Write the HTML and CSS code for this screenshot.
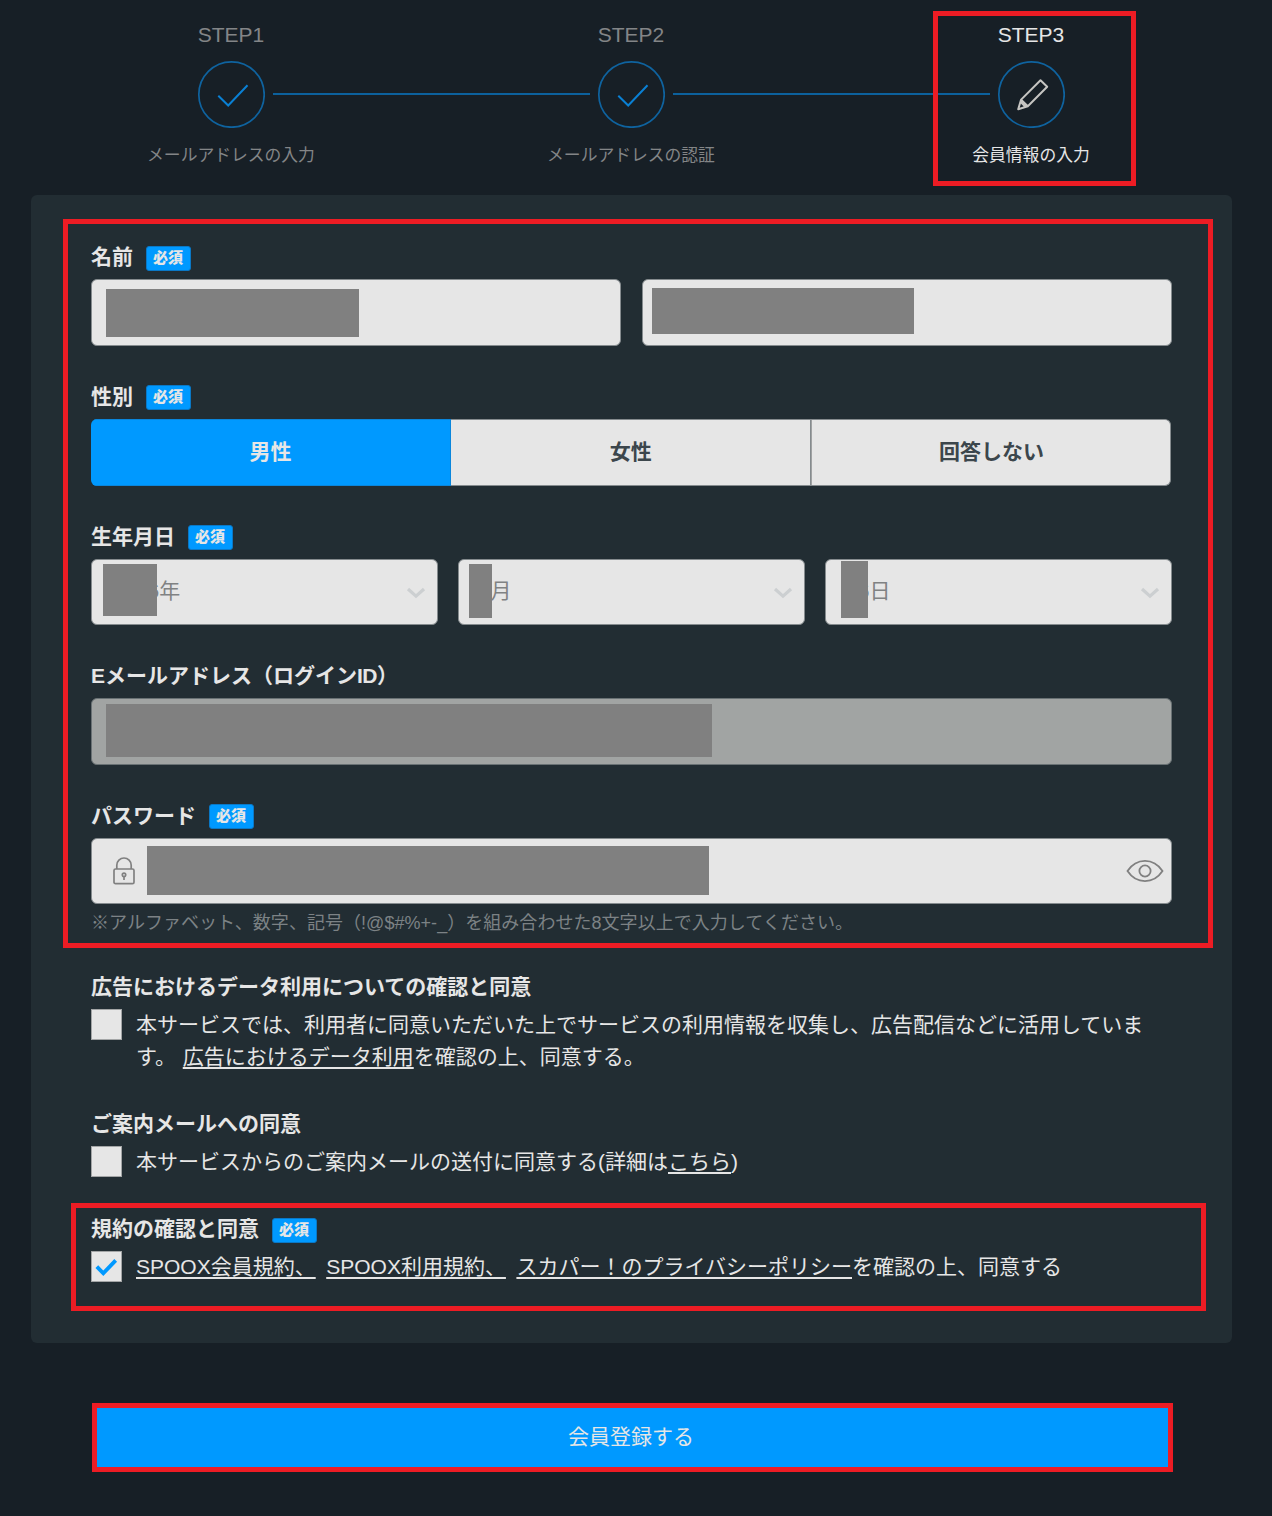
FILE: index.html
```html
<!DOCTYPE html>
<html lang="ja">
<head>
<meta charset="utf-8">
<title>会員情報の入力</title>
<link rel="stylesheet" href="styles.css">
</head>
<body>
<div class="page">
  <ol class="steps">
    <li class="step">
      <span class="step-no">STEP1</span>
      <span class="step-icon"><svg viewBox="0 0 68 68"><circle cx="34.5" cy="34.5" r="32.7"/><path class="tick" d="M21.3 35.8 31.2 45.5 50.5 25.3"/></svg></span>
      <span class="step-name">メールアドレスの入力</span>
    </li>
    <li class="step-line"></li>
    <li class="step">
      <span class="step-no">STEP2</span>
      <span class="step-icon"><svg viewBox="0 0 68 68"><circle cx="34.5" cy="34.5" r="32.7"/><path class="tick" d="M21.3 35.8 31.2 45.5 50.5 25.3"/></svg></span>
      <span class="step-name">メールアドレスの認証</span>
    </li>
    <li class="step-line"></li>
    <li class="step current">
      <span class="step-no">STEP3</span>
      <span class="step-icon"><svg viewBox="0 0 68 68"><circle cx="34.5" cy="34.5" r="32.7"/><path class="pencil" d="M43.5 20.3 50.2 26.8 30.8 46.2 21.2 49.2 24.1 39.6ZM24.1 39.6 30.8 46.2M23.8 42 28.2 46.5"/></svg></span>
      <span class="step-name">会員情報の入力</span>
    </li>
  </ol>

  <main class="panel">
    <section class="field">
      <h2 class="label">名前<span class="badge">必須</span></h2>
      <div class="row">
        <div class="box"><span class="mask mask-sei"></span></div>
        <div class="box"><span class="mask mask-mei"></span></div>
      </div>
    </section>
    <section class="field">
      <h2 class="label">性別<span class="badge">必須</span></h2>
      <div class="segments">
        <div class="segment selected">男性</div>
        <div class="segment">女性</div>
        <div class="segment">回答しない</div>
      </div>
    </section>
    <section class="field">
      <h2 class="label">生年月日<span class="badge">必須</span></h2>
      <div class="row">
        <div class="box select year"><span>6年</span><span class="mask mask-year"></span><svg class="chevron" viewBox="0 0 20 12"><path d="M2 2 10 9.2 18 2"/></svg></div>
        <div class="box select month"><span>月</span><span class="mask mask-month"></span><svg class="chevron" viewBox="0 0 20 12"><path d="M2 2 10 9.2 18 2"/></svg></div>
        <div class="box select day"><span>6日</span><span class="mask mask-day"></span><svg class="chevron" viewBox="0 0 20 12"><path d="M2 2 10 9.2 18 2"/></svg></div>
      </div>
    </section>
    <section class="field">
      <h2 class="label">Eメールアドレス（ログイン<span class="login-id">ID</span>）</h2>
      <div class="row"><div class="box disabled"><span class="mask mask-mail"></span></div></div>
    </section>
    <section class="field password">
      <h2 class="label">パスワード<span class="badge">必須</span></h2>
      <div class="row">
        <div class="box secret">
          <svg class="lock" viewBox="0 0 24 30"><path d="M4.8 13V9.2a7.2 7.2 0 0 1 14.4 0V13"/><rect x="2" y="13" width="20" height="14.7" rx="1.5"/><circle cx="12" cy="18.8" r="1.7"/><path d="M12 20.5V24"/></svg>
          <span class="mask mask-pass"></span>
          <svg class="eye" viewBox="0 0 38 24"><path d="M1.5 12C10.5-1.5 27.5-1.5 36.5 12 27.5 25.5 10.5 25.5 1.5 12Z"/><circle cx="19" cy="12" r="5.6"/></svg>
        </div>
      </div>
      <p class="hint">※アルファベット、数字、記号（!@$#%+-_）を組み合わせた8文字以上で入力してください。</p>
    </section>

    <section class="consent ads">
      <h2 class="label">広告におけるデータ利用についての確認と同意</h2>
      <div class="check-row">
        <span class="checkbox"></span>
        <p>本サービスでは、利用者に同意いただいた上でサービスの利用情報を収集し、広告配信などに活用していま<br>す。 <a class="inline-link">広告におけるデータ利用</a>を確認の上、同意する。</p>
      </div>
    </section>
    <section class="consent mail">
      <h2 class="label">ご案内メールへの同意</h2>
      <div class="check-row">
        <span class="checkbox"></span>
        <p>本サービスからのご案内メールの送付に同意する(詳細は<a>こちら</a>)</p>
      </div>
    </section>
    <section class="consent terms">
      <h2 class="label">規約の確認と同意<span class="badge">必須</span></h2>
      <div class="check-row">
        <span class="checkbox"><svg viewBox="0 0 30 30"><path d="M5 15.2 11.7 22 24.5 8.6"/></svg></span>
        <p class="links"><a>SPOOX会員規約、</a><a>SPOOX利用規約、</a><a>スカパー！のプライバシーポリシー</a>を確認の上、同意する</p>
      </div>
    </section>
  </main>

  <div class="submit">会員登録する</div>

  <div class="frame frame-step"></div>
  <div class="frame frame-form"></div>
  <div class="frame frame-terms"></div>
</div>
</body>
</html>
```
FILE: styles.css
```css
* { box-sizing: border-box; }

body {
  margin: 0;
  background: #171f26;
  color: #e6e6e6;
  font: 21px/31.5px "Liberation Sans", "Noto Sans CJK JP", sans-serif;
  text-spacing-trim: space-all;
}

.page {
  position: relative;
  height: 1516px;
  padding: 19px 41px 0 31px;
  overflow: hidden;
}

h2, p, ol { margin: 0; padding: 0; }
svg { display: block; fill: none; }

/* Progress */
.steps {
  display: flex;
  justify-content: space-between;
  height: 176px;
  padding: 0 166px;
  list-style: none;
}
.step {
  display: flex;
  flex-direction: column;
  align-items: center;
  width: 400px;
  margin: 0 -166px;
  color: #838587;
  white-space: nowrap;
}
.step-no { height: 41px; }
.step-icon { width: 68px; height: 68px; }
.step-icon circle { stroke: #0f639f; stroke-width: 1.7; }
.tick { stroke: #0a80d4; stroke-width: 2; }
.pencil { stroke: #c6c5c2; stroke-width: 2; stroke-linejoin: round; }
.step-name { margin-top: 12px; font-size: 16.8px; }
.step-line { width: 317px; height: 2px; margin-top: 74px; background: #0c619d; }
.current { color: #e6e6e6; }

/* Form panel */
.panel {
  width: 1200.5px;
  height: 1148px;
  padding: 42.4px 60px 0;
  border-radius: 6px;
  background: #222d33;
}
.field { height: 139.6px; }
.label {
  display: flex;
  align-items: center;
  height: 42px;
  padding-bottom: 2px;
  font-size: 21px;
  font-weight: 700;
  line-height: 30px;
}
.login-id { letter-spacing: -0.5px; }
.badge {
  width: 45px;
  height: 25px;
  margin: 2px 0 0 12.5px;
  border: 1px solid #0a78c6;
  border-radius: 3px;
  background: #0099ff;
  font-size: 15px;
  font-weight: 900;
  line-height: 22px;
  text-align: center;
}
.row {
  display: grid;
  grid-auto-flow: column;
  grid-auto-columns: minmax(0, 1fr);
  gap: 20.5px;
}
.box {
  position: relative;
  height: 66.5px;
  border: 1px solid #858b8e;
  border-radius: 6px;
  background: #e6e6e6;
}
.mask { position: absolute; background: #808080; }
.mask-sei { left: 14px; top: 8.6px; width: 253px; height: 48px; }
.mask-mei { left: 9.6px; top: 7.6px; width: 262px; height: 46px; }
.mask-year { left: 11px; top: 4.4px; width: 54px; height: 52px; }
.mask-month { left: 9.8px; top: 4.4px; width: 23px; height: 54px; }
.mask-day { left: 14.8px; top: 1.4px; width: 27px; height: 57px; }
.mask-mail { left: 14px; top: 4.8px; width: 606px; height: 53px; }
.mask-pass { left: 55px; top: 7.2px; width: 562px; height: 49px; }

.segments {
  display: grid;
  grid-template-columns: repeat(3, minmax(0, 1fr));
  height: 67px;
  border-radius: 6px;
  overflow: hidden;
}
.segment {
  border: 1px solid #858b8e;
  border-left: 0;
  background: #e6e6e6;
  color: #3c464c;
  font-weight: 700;
  line-height: 63px;
  text-align: center;
}
.segment:last-child { border-left: 1px solid #a0a2a3; border-radius: 0 6px 6px 0; }
.segment.selected { border-color: #0a86dc; background: #0099ff; color: #e6e6e6; }

.select {
  display: flex;
  align-items: center;
  justify-content: space-between;
  padding: 0 11px 3px 55.5px;
  color: #808283;
}
.select.month { padding-left: 31.5px; }
.select.day { padding-left: 31.8px; }
.chevron { width: 20px; height: 12px; margin-top: 5px; }
.chevron path { stroke: #cccfd1; stroke-width: 3.2; }
.disabled { border-color: #697174; background: #a1a4a3; }
.secret {
  display: flex;
  align-items: center;
  justify-content: space-between;
  padding: 0 7px 0 20px;
}
.lock { width: 24px; height: 30px; stroke: #808080; stroke-width: 1.7; }
.eye { width: 38px; height: 24px; stroke: #808080; stroke-width: 1.8; }
.hint {
  height: 35px;
  padding-top: 3.5px;
  color: #7c8285;
  font-size: 18px;
  letter-spacing: 0.04px;
  white-space: nowrap;
}

/* Consents */
.password { height: 174.5px; }
.consent .label { height: 36px; }
.ads { height: 137px; }
.mail { height: 105px; }
.check-row { display: flex; gap: 14px; padding-top: 3px; white-space: nowrap; }
.checkbox {
  flex: none;
  width: 31px;
  height: 31px;
  border: 1px solid #a3a5a6;
  background: #e6e6e6;
}
.checkbox path { stroke: #0099ff; stroke-width: 4; }
.check-row a { text-decoration: underline; text-decoration-thickness: 2px; text-underline-offset: 3px; }
.inline-link { margin-left: 1px; }
.links a + a { margin-left: 10.5px; }

.submit {
  width: 1081px;
  height: 69px;
  margin: 60px 0 0 61px;
  padding-right: 3px;
  border: 5px solid #ed1c24;
  background: #0099ff;
  line-height: 57px;
  text-align: center;
}

/* Highlight frames drawn over the form */
.frame { position: absolute; border: 5px solid #ed1c24; pointer-events: none; }
.frame-step { left: 933px; top: 11px; width: 203px; height: 175px; }
.frame-form { left: 63px; top: 219px; width: 1150px; height: 729px; }
.frame-terms { left: 71px; top: 1203px; width: 1135px; height: 108px; }
```
